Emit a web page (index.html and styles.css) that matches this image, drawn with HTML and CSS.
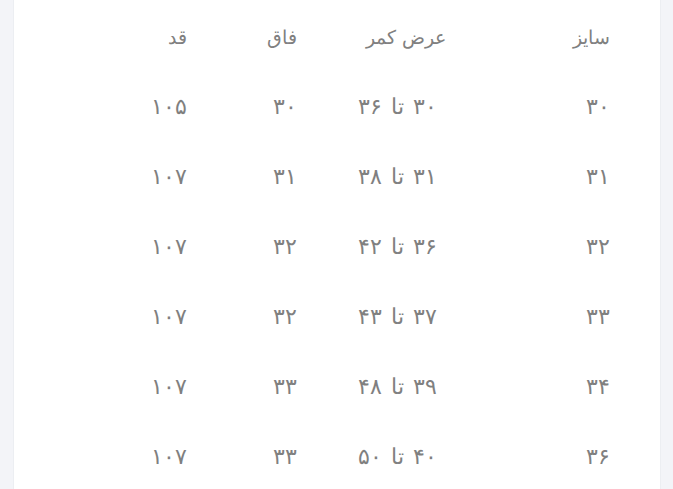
FILE: index.html
```html
<!DOCTYPE html>
<html lang="fa" dir="rtl">
<head>
<meta charset="utf-8">
<title>جدول سایز</title>
<link rel="stylesheet" href="styles.css">
</head>
<body>
<div class="card">
  <div class="size-table">
    <div class="row head">
      <div class="cell">سایز</div>
      <div class="cell">عرض کمر</div>
      <div class="cell">فاق</div>
      <div class="cell">قد</div>
    </div>
    <div class="row">
      <div class="cell">۳۰</div>
      <div class="cell">۳۰ تا ۳۶</div>
      <div class="cell">۳۰</div>
      <div class="cell">۱۰۵</div>
    </div>
    <div class="row">
      <div class="cell">۳۱</div>
      <div class="cell">۳۱ تا ۳۸</div>
      <div class="cell">۳۱</div>
      <div class="cell">۱۰۷</div>
    </div>
    <div class="row">
      <div class="cell">۳۲</div>
      <div class="cell">۳۶ تا ۴۲</div>
      <div class="cell">۳۲</div>
      <div class="cell">۱۰۷</div>
    </div>
    <div class="row">
      <div class="cell">۳۳</div>
      <div class="cell">۳۷ تا ۴۳</div>
      <div class="cell">۳۲</div>
      <div class="cell">۱۰۷</div>
    </div>
    <div class="row">
      <div class="cell">۳۴</div>
      <div class="cell">۳۹ تا ۴۸</div>
      <div class="cell">۳۳</div>
      <div class="cell">۱۰۷</div>
    </div>
    <div class="row">
      <div class="cell">۳۶</div>
      <div class="cell">۴۰ تا ۵۰</div>
      <div class="cell">۳۳</div>
      <div class="cell">۱۰۷</div>
    </div>
  </div>
</div>
</body>
</html>
```
FILE: styles.css
```css
html, body {
  margin: 0;
  padding: 0;
  height: 100%;
}
body {
  background: #f3f4f8;
  font-family: "DejaVu Sans", "Noto Sans", sans-serif;
  color: #808080;
  overflow: hidden;
}
.card {
  margin: 0 12px 0 13px;
  min-height: 100%;
  background: #ffffff;
  border-left: 1px solid #eceef2;
  border-right: 1px solid #eceef2;
  box-sizing: border-box;
  padding: 3px 50px 0 0;
}
.size-table {
  display: flex;
  flex-direction: column;
}
.row {
  display: grid;
  grid-template-columns: 173px 140px 110px 1fr;
  align-items: center;
  height: 70px;
  font-size: 22px;
  font-weight: 300;
  word-spacing: 2px;
}
.row.head {
  height: 68px;
  font-size: 19px;
  word-spacing: 0;
}
.row.head .cell:nth-child(2) {
  margin-right: -9px;
}
.cell {
  text-align: right;
  white-space: nowrap;
}
```
